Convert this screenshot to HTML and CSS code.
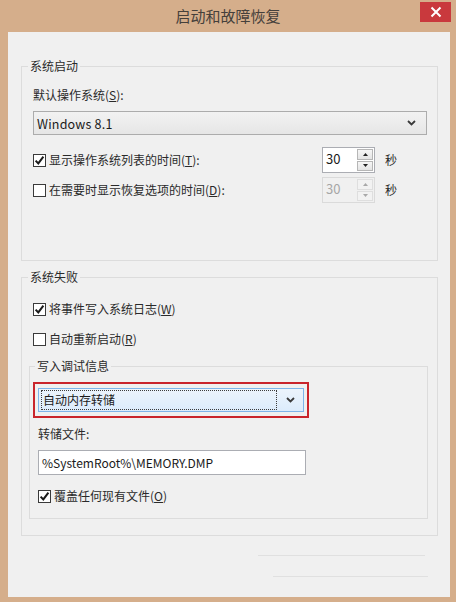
FILE: index.html
```html
<!DOCTYPE html>
<html lang="zh-CN">
<head>
<meta charset="utf-8">
<title>启动和故障恢复</title>
<link rel="stylesheet" href="styles.css">
</head>
<body>
<div class="window">
  <div class="titlebar">
    <span class="title">启动和故障恢复</span>
    <span class="close"><svg width="12" height="12" viewBox="0 0 12 12"><path d="M1.5 1.5 L10.5 10.5 M10.5 1.5 L1.5 10.5" stroke="#fff" stroke-width="2" fill="none"/></svg></span>
  </div>
  <div class="client">
    <fieldset class="group g1">
      <legend>系统启动</legend>
      <div class="g1-body">
        <div class="label">默认操作系统(<u>S</u>):</div>
        <div class="combo os">
          <span class="combo-text">Windows 8.1</span>
          <svg class="chev" width="9" height="6" viewBox="0 0 9 6"><path d="M1 1 L4.5 4.5 L8 1" stroke="#3a3a3a" stroke-width="1.8" fill="none"/></svg>
        </div>
        <div class="timer-row first">
          <div class="check"><span class="box"><svg width="11" height="11" viewBox="0 0 11 11"><path d="M1.6 5.6 L4.3 8.4 L9.4 1.6" stroke="#1a1a1a" stroke-width="2" fill="none"/></svg></span><span>显示操作系统列表的时间(<u>T</u>):</span></div>
          <div class="spin">
            <span class="spin-val">30</span>
            <span class="spin-btns">
              <span class="sbtn"><svg width="5" height="3" viewBox="0 0 5 3"><path d="M0 3 L2.5 0 L5 3 Z" fill="#222"/></svg></span>
              <span class="sbtn"><svg width="5" height="3" viewBox="0 0 5 3"><path d="M0 0 L2.5 3 L5 0 Z" fill="#222"/></svg></span>
            </span>
          </div>
          <span class="unit">秒</span>
        </div>
        <div class="timer-row second">
          <div class="check"><span class="box"></span><span>在需要时显示恢复选项的时间(<u>D</u>):</span></div>
          <div class="spin disabled">
            <span class="spin-val">30</span>
            <span class="spin-btns">
              <span class="sbtn"><svg width="5" height="3" viewBox="0 0 5 3"><path d="M0 3 L2.5 0 L5 3 Z" fill="#a8a8a8"/></svg></span>
              <span class="sbtn"><svg width="5" height="3" viewBox="0 0 5 3"><path d="M0 0 L2.5 3 L5 0 Z" fill="#a8a8a8"/></svg></span>
            </span>
          </div>
          <span class="unit">秒</span>
        </div>
      </div>
    </fieldset>

    <fieldset class="group g2">
      <legend>系统失败</legend>
      <div class="g2-body">
        <div class="check row-a"><span class="box"><svg width="11" height="11" viewBox="0 0 11 11"><path d="M1.6 5.6 L4.3 8.4 L9.4 1.6" stroke="#1a1a1a" stroke-width="2" fill="none"/></svg></span><span>将事件写入系统日志(<u>W</u>)</span></div>
        <div class="check row-b"><span class="box"></span><span>自动重新启动(<u>R</u>)</span></div>
        <fieldset class="group inner">
          <legend>写入调试信息</legend>
          <div class="inner-body">
            <div class="highlight">
              <div class="combo dump">
                <span class="focus-area">自动内存转储</span>
                <svg class="chev" width="9" height="6" viewBox="0 0 9 6"><path d="M1 1 L4.5 4.5 L8 1" stroke="#3a3a3a" stroke-width="1.8" fill="none"/></svg>
              </div>
            </div>
            <div class="label dump-label">转储文件:</div>
            <div class="textbox">%SystemRoot%\MEMORY.DMP</div>
            <div class="check row-c"><span class="box"><svg width="11" height="11" viewBox="0 0 11 11"><path d="M1.6 5.6 L4.3 8.4 L9.4 1.6" stroke="#1a1a1a" stroke-width="2" fill="none"/></svg></span><span>覆盖任何现有文件(<u>O</u>)</span></div>
          </div>
        </fieldset>
      </div>
    </fieldset>

    <div class="faint line1"></div>
    <div class="faint line2"></div>
  </div>
</div>
</body>
</html>
```

FILE: styles.css
```css
* { box-sizing: border-box; }
html, body { margin: 0; padding: 0; }
body {
  font-family: "Noto Sans CJK SC", "Microsoft YaHei", sans-serif;
  font-size: 12px;
  color: #2a2a2a;
  background: #d5ae8b;
}
u { text-decoration: underline; text-underline-offset: 1px; }

.window {
  width: 456px;
  height: 602px;
  background: #d5ae8b;
  display: flex;
  flex-direction: column;
}

.titlebar {
  height: 32px;
  display: grid;
  grid-template-columns: 1fr auto 1fr;
  align-items: center;
}
.title {
  grid-column: 2;
  font-size: 15px;
  line-height: 20px;
  color: #45403b;
}
.close {
  grid-column: 3;
  justify-self: end;
  align-self: start;
  margin-top: 2px;
  margin-right: 5px;
  width: 31px;
  height: 20px;
  background: #c9393d;
  display: flex;
  align-items: center;
  justify-content: center;
}

.client {
  margin: 0 6px 5px 8px;
  height: 565px;
  background: #f0f0f0;
  padding-top: 26px;
}

.group {
  border: 1px solid #dcdcdc;
  padding: 0;
  margin: 0;
  min-width: 0;
}
.group > legend {
  padding: 0 2px;
  margin-left: 6px;
  line-height: 16px;
  height: 16px;
  color: #2a2a2a;
}
.g1 { margin: 0 12px 0 13px; }
.g2 { margin: 8px 12px 0 13px; }

.g1-body { padding: 13px 10px 57px 11px; }

.label { line-height: 16px; height: 16px; }

.combo {
  display: flex;
  align-items: center;
  height: 24px;
  border: 1px solid #acacac;
}
.combo.os {
  margin-top: 8px;
  background: linear-gradient(#f2f2f2, #e6e6e6);
  padding: 0 10px 0 3px;
}
.combo-text {
  flex: 1;
  font-size: 12.5px;
  color: #1a1a1a;
  letter-spacing: 0.2px;
}
.chev { display: block; }

.timer-row {
  display: flex;
  align-items: center;
}
.timer-row.first { margin-top: 12px; }
.timer-row.second { margin-top: 4px; }
.timer-row .check { flex: 1; }

.check {
  display: flex;
  align-items: center;
  line-height: 16px;
  height: 16px;
}
.box {
  width: 13px;
  height: 13px;
  border: 1px solid #3a3a3a;
  background: #fff;
  margin-right: 3px;
  display: flex;
  align-items: center;
  justify-content: center;
  flex: none;
}
.box svg { display: block; }

.spin {
  width: 53px;
  height: 26px;
  border: 1px solid #abadb3;
  background: #fff;
  display: flex;
}
.spin-val {
  flex: 1;
  padding-left: 3px;
  line-height: 22px;
  font-size: 13px;
  color: #1a1a1a;
}
.spin-btns {
  width: 17px;
  display: flex;
  flex-direction: column;
  padding: 1px 1px 1px 0;
  gap: 1px;
}
.sbtn {
  flex: 1;
  border: 1px solid #b6b6b6;
  background: linear-gradient(#f6f6f6, #e4e4e4);
  display: flex;
  align-items: center;
  justify-content: center;
}
.sbtn svg { display: block; }
.spin.disabled { background: #f0f0f0; border-color: #dadada; }
.spin.disabled .spin-val { color: #a6a6a6; }
.spin.disabled .sbtn { border-color: #dedede; background: #f2f2f2; }

.unit {
  width: 12px;
  margin-left: 10px;
  margin-right: 30px;
  line-height: 16px;
}

.g2-body { padding: 16px 9px 16px 7px; }
.g2-body > .check { padding-left: 4px; }
.row-b { margin-top: 14px; }

.inner { margin-top: 11px; }
.inner > legend { margin-left: 5px; }
.inner-body { padding: 8px 0 14px 8px; }

.highlight {
  width: 276px;
  margin-left: -5px;
  border: 2px solid #c9252c;
  padding: 4px 3px;
}
.combo.dump {
  width: 266px;
  border-color: #7eb4ea;
  background: linear-gradient(#ecf4fc, #dcecfc);
  padding: 0 8px 0 2px;
}
.focus-area {
  flex: 1;
  height: 20px;
  line-height: 18px;
  border: 1px dotted #3c3c3c;
  padding-left: 1px;
  margin-right: 9px;
  font-size: 12px;
  color: #1a1a1a;
}

.dump-label { margin-top: 8px; }

.textbox {
  margin-top: 8px;
  width: 268px;
  height: 25px;
  border: 1px solid #abadb3;
  background: #fff;
  padding-left: 3px;
  line-height: 23px;
  font-size: 12px;
  color: #1a1a1a;
}

.row-c { margin-top: 13px; }

.faint {
  height: 1px;
  background: #e0e0e0;
}
.line1 { margin: 19px 0 0 250px; width: 167px; }
.line2 { margin: 20px 0 0 265px; width: 155px; }
```
